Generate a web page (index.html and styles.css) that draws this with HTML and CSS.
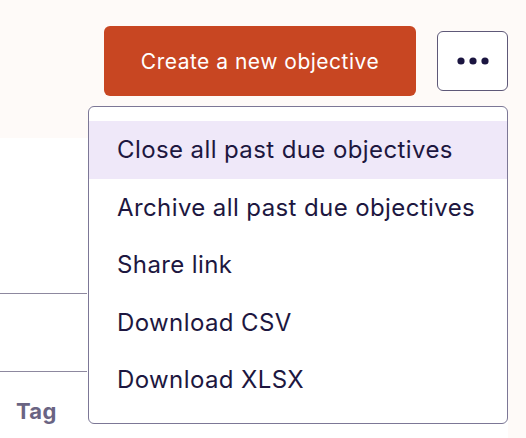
FILE: index.html
```html
<!DOCTYPE html>
<html>
<head>
<meta charset="utf-8">
<link rel="stylesheet" href="styles.css">
</head>
<body>
<div class="page">
  <header class="header">
    <div class="actions">
      <button class="btn-primary">Create a new objective</button>
      <div class="more-wrap">
        <button class="btn-more" aria-label="More">
          <svg width="34" height="10" viewBox="0 0 34 10"><circle cx="5" cy="5" r="3.6" fill="#1b1540"/><circle cx="17" cy="5" r="3.6" fill="#1b1540"/><circle cx="29" cy="5" r="3.6" fill="#1b1540"/></svg>
        </button>
        <ul class="menu">
          <li class="menu-item active">Close all past due objectives</li>
          <li class="menu-item">Archive all past due objectives</li>
          <li class="menu-item">Share link</li>
          <li class="menu-item">Download CSV</li>
          <li class="menu-item">Download XLSX</li>
        </ul>
      </div>
    </div>
  </header>
  <main class="content">
    <div class="row row-1"></div>
    <div class="row row-2"></div>
    <div class="row row-3"><span class="tag">Tag</span></div>
  </main>
</div>
</body>
</html>
```
FILE: styles.css
```css
* { box-sizing: border-box; }
html, body { margin: 0; padding: 0; }
body {
  background: #fefaf8;
  font-family: "Inter", "Noto Sans", sans-serif;
  width: 526px;
  height: 438px;
  overflow: hidden;
}
.page { width: 526px; height: 438px; display: flex; flex-direction: column; }
.header {
  height: 138px;
  background: #fefaf8;
  display: flex;
  justify-content: flex-end;
  padding: 26px 18px 0 0;
}
.actions { display: flex; align-items: flex-start; gap: 21px; }
.btn-primary {
  width: 312px;
  height: 70px;
  background: #c84622;
  color: #fff;
  border: none;
  border-radius: 6px;
  font-family: inherit;
  font-size: 21px;
  letter-spacing: 0.5px;
  padding: 0;
}
.more-wrap { position: relative; }
.btn-more {
  margin-top: 5px;
  width: 71px;
  height: 60px;
  background: #fff;
  border: 1px solid #5e5878;
  border-radius: 6px;
  display: flex;
  align-items: center;
  justify-content: center;
  padding: 0;
}
.menu {
  position: absolute;
  top: 80px;
  right: 0;
  width: 420px;
  margin: 0;
  padding: 14px 0;
  list-style: none;
  background: #fff;
  border: 1px solid #7c7796;
  border-radius: 6px;
  z-index: 2;
}
.menu-item {
  height: 57.5px;
  display: flex;
  align-items: center;
  padding-left: 28px;
  font-size: 24px;
  color: #1d1740;
  letter-spacing: 0.4px;
}
.menu-item.active { background: #efe8f9; }
.content {
  flex: 1;
  background: #fff;
  width: 508px;
  display: flex;
  flex-direction: column;
}
.row { width: 87px; }
.row-1 { height: 156px; border-bottom: 1px solid #8d889f; }
.row-2 { height: 78px; border-bottom: 1px solid #8d889f; }
.row-3 { padding: 26px 0 0 16px; }
.tag { font-size: 22px; font-weight: 700; color: #6a6483; letter-spacing: 0.3px; }
```
